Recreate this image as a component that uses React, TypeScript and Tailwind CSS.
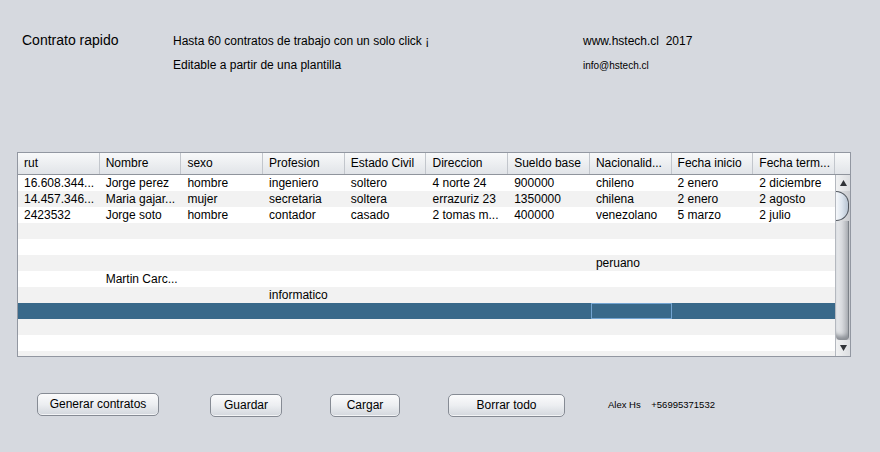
import React from "react";

const columns = [
  "rut",
  "Nombre",
  "sexo",
  "Profesion",
  "Estado Civil",
  "Direccion",
  "Sueldo base",
  "Nacionalid...",
  "Fecha inicio",
  "Fecha term...",
];

const rows: string[][] = [
  ["16.608.344...", "Jorge perez", "hombre", "ingeniero", "soltero", "4 norte 24", "900000", "chileno", "2 enero", "2 diciembre"],
  ["14.457.346...", "Maria gajar...", "mujer", "secretaria", "soltera", "errazuriz 23", "1350000", "chilena", "2 enero", "2 agosto"],
  ["2423532", "Jorge soto", "hombre", "contador", "casado", "2 tomas m...", "400000", "venezolano", "5 marzo", "2 julio"],
  ["", "", "", "", "", "", "", "", "", ""],
  ["", "", "", "", "", "", "", "", "", ""],
  ["", "", "", "", "", "", "", "peruano", "", ""],
  ["", "Martin Carc...", "", "", "", "", "", "", "", ""],
  ["", "", "", "informatico", "", "", "", "", "", ""],
  ["", "", "", "", "", "", "", "", "", ""],
  ["", "", "", "", "", "", "", "", "", ""],
  ["", "", "", "", "", "", "", "", "", ""],
  ["", "", "", "", "", "", "", "", "", ""],
];

const SELECTED = 8;
const FOCUS_COL = 7;

const NimbusButton = ({ label, width }: { label: string; width: string }) => (
  <button
    className={`${width} h-[23px] rounded-[5px] border border-[#868b94] bg-gradient-to-b from-[#fbfbfc] via-[#eceef1] to-[#d3d7dd] text-[12px] leading-[20px] text-black shadow-[inset_0_-1px_0_#f3f4f6]`}
  >
    {label}
  </button>
);

export default function App() {
  return (
    <div className="w-[880px] h-[452px] overflow-hidden bg-[#d6d9df] font-['Liberation_Sans',Arial,sans-serif] text-black">
      {/* Header texts */}
      <div className="flex h-[152px] pl-[22px] pt-[32px]">
        <div className="w-[151px] text-[14px] leading-4">Contrato rapido</div>
        <div className="w-[410px] flex flex-col text-[12px] leading-4 pt-[1px]">
          <p>Hasta 60 contratos de trabajo con un solo click ¡</p>
          <p className="mt-[8px]">Editable a partir de una plantilla</p>
        </div>
        <div className="flex flex-col pt-[1px]">
          <p className="text-[12px] leading-4 whitespace-pre">www.hstech.cl  2017</p>
          <p className="mt-[11px] text-[10px] leading-3">info@hstech.cl</p>
        </div>
      </div>

      {/* Table */}
      <div className="ml-[17px] w-[834px] h-[205px] border border-[#9297a1] bg-[#f2f2f2] flex flex-col overflow-hidden">
        <div className="flex h-[22px] border-b border-[#8f949c]">
          <div className="grid grid-cols-10 w-[817px]">
            {columns.map((c) => (
              <div
                key={c}
                className="h-[21px] pl-[6px] border-r border-[#c2c6cc] bg-gradient-to-b from-[#f8f9fa] to-[#e1e4e8] text-[12px] leading-[21px] whitespace-nowrap overflow-hidden"
              >
                {c}
              </div>
            ))}
          </div>
          <div className="flex-1 bg-gradient-to-b from-[#f8f9fa] to-[#e1e4e8]" />
        </div>
        <div className="flex flex-1 min-h-0">
          <div className="w-[817px] overflow-hidden">
            {rows.map((r, i) => (
              <div
                key={i}
                className={`grid grid-cols-10 h-4 ${
                  i === SELECTED ? "bg-[#39698a]" : i % 2 === 0 ? "bg-white" : "bg-[#f2f2f2]"
                }`}
              >
                {r.map((cell, j) => (
                  <div
                    key={j}
                    className={`h-4 pl-[6px] text-[12px] leading-4 whitespace-nowrap overflow-hidden ${
                      i === SELECTED && j === FOCUS_COL ? "border border-[#73a4d1] ml-[1px]" : ""
                    }`}
                  >
                    {cell}
                  </div>
                ))}
              </div>
            ))}
          </div>
          {/* Scrollbar */}
          <div className="flex-1 flex flex-col border-l border-[#b4b8bf] bg-gradient-to-r from-[#e4e5e7] to-[#c9cbcf]">
            <div className="h-4 flex items-center justify-center bg-gradient-to-r from-[#f1f2f3] to-[#dcdee1]">
              <svg width="7" height="6" viewBox="0 0 7 6">
                <path d="M3.5 0 L7 6 L0 6 Z" fill="#303338" />
              </svg>
            </div>
            <div className="flex-1 flex flex-col mr-[1px]">
              <div className="h-[30px] rounded-tr-[14px] rounded-br-[14px] border border-l-0 border-[#50565e] bg-gradient-to-r from-[#f6f8fb] via-[#dde5ee] to-[#b7c3d1]" />
              <div className="flex-1 rounded-b-[4px] border-r border-[#7c8188] bg-gradient-to-r from-[#eceef0] via-[#d7d9dd] to-[#aeb1b6] shadow-[inset_0_-6px_4px_-2px_#8a8e94]" />
            </div>
            <div className="h-4 flex items-center justify-center bg-gradient-to-r from-[#f1f2f3] to-[#dcdee1]">
              <svg width="7" height="6" viewBox="0 0 7 6">
                <path d="M0 0 L7 0 L3.5 6 Z" fill="#303338" />
              </svg>
            </div>
          </div>
        </div>
      </div>

      {/* Buttons */}
      <div className="flex items-center mt-[35px] pl-[37px]">
        <NimbusButton label="Generar contratos" width="w-[122px]" />
        <div className="ml-[51px]">
          <NimbusButton label="Guardar" width="w-[72px]" />
        </div>
        <div className="ml-[48px]">
          <NimbusButton label="Cargar" width="w-[70px]" />
        </div>
        <div className="ml-[48px]">
          <NimbusButton label="Borrar todo" width="w-[117px]" />
        </div>
        <p className="ml-[43px] text-[9.5px] leading-3 whitespace-pre pt-[1px]">Alex Hs    +56995371532</p>
      </div>
    </div>
  );
}
